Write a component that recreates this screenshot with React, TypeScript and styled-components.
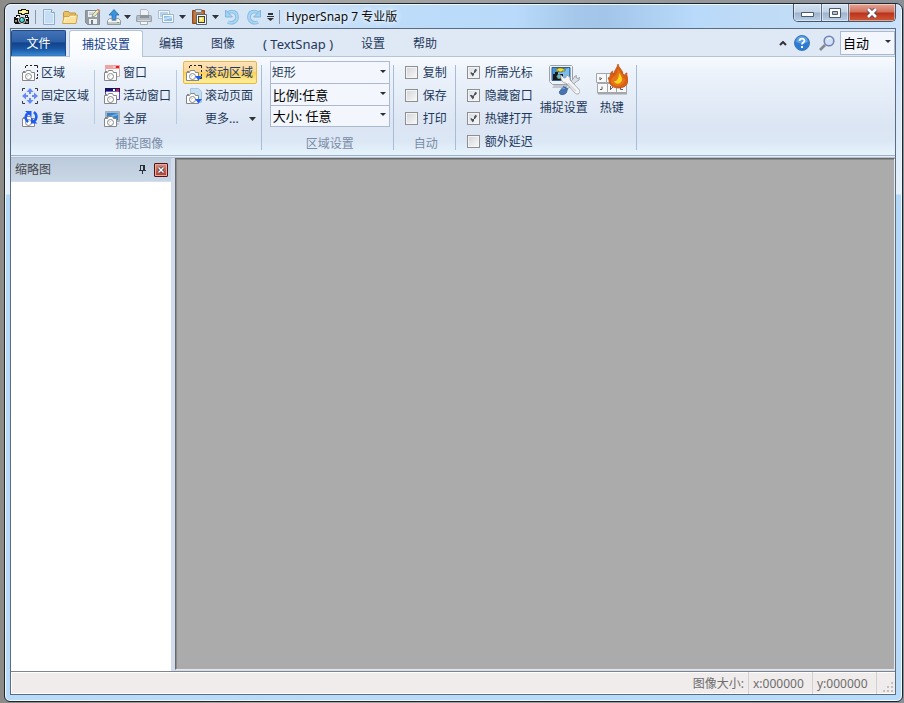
import React from "react";
import styled, { createGlobalStyle, css } from "styled-components";

const font = '"Noto Sans", "Noto Sans CJK SC", sans-serif';

const Global = createGlobalStyle`
  * { box-sizing: border-box; }
  body { margin: 0; font: 12px/16px ${font}; color: #1e395b; }
  button, select, input { font: inherit; color: inherit; margin: 0; padding: 0; }
  button { background: none; border: 0; cursor: default; white-space: nowrap; }
  svg { display: block; flex: none; }
`;

const Desktop = styled.div`
  display: flex;
  height: 100vh;
  padding: 3px 1px 1px 4px;
  background: linear-gradient(90deg, #8d8b88, #a9a8a5 30%, #8b8f96);
`;

const Window = styled.main`
  flex: 1;
  min-width: 0;
  display: flex;
  flex-direction: column;
  padding: 0 6px 6px 5px;
  border: 1px solid #1d252e;
  border-radius: 7px 7px 6px 6px;
  background: linear-gradient(180deg, #c9e0f8 0, #e4f0fc 190px, #b4d8fa 191px, #b9dbfa 100%);
  box-shadow: inset 0 0 0 1px #f0f8ff;
`;

const TitleBar = styled.header`
  display: flex;
  height: 24px;
  margin: 0 0 0 -4px;
  padding-left: 6px;
  border-radius: 6px 6px 0 0;
  border-top: 1px solid #f0f8ff;
  background: linear-gradient(90deg, #d8e4f2 0, #d6e5f5 240px, #bddcfa 390px, #b9dafa 510px, #a5c8ea 570px, #a3c5e8 600px, #b9dafa 690px, #c0dbf5 760px, #c9e2fb 100%);
`;

const QuickAccess = styled.nav`
  display: flex;
  align-items: center;
  flex: 1;
  min-width: 0;
  height: 24px;
`;

const Tool = styled.button<{ $w: number }>`
  flex: none;
  display: flex;
  justify-content: center;
  align-items: center;
  width: ${(p) => p.$w}px;
  height: 20px;
`;

const TitleRule = styled.span`
  flex: none;
  width: 1px;
  height: 14px;
  margin: 0 3px;
  background: #8497ae;
`;

const Title = styled.h1`
  margin: 0 0 0 3px;
  font-size: 12px;
  font-weight: 400;
  color: #0c0c0c;
  text-shadow: 0 0 6px #fff, 0 0 6px #fff;
  white-space: nowrap;
`;

const WindowButtons = styled.div`
  display: flex;
  flex: none;
  height: 18px;
  margin-top: -1px;
  border: 1px solid #46566a;
  border-top: 0;
  border-radius: 0 0 5px 5px;
  overflow: hidden;
`;

const WindowButton = styled.button<{ $close?: boolean }>`
  display: flex;
  align-items: center;
  justify-content: center;
  width: ${(p) => (p.$close ? 46 : 27)}px;
  &:first-child { width: 28px; padding-top: 3px; }
  border-right: ${(p) => (p.$close ? "0" : "1px solid #5d6f85")};
  box-shadow: inset 0 0 0 1px rgba(255, 255, 255, 0.45);
  background: ${(p) =>
    p.$close
      ? "linear-gradient(#e5a595, #d0705c 48%, #b9321c 52%, #cf5a38)"
      : "linear-gradient(#d5e3f2, #c0d2e6 48%, #9db2cb 52%, #b9d0e8)"};
`;

const Client = styled.div`
  flex: 1;
  min-height: 0;
  display: flex;
  flex-direction: column;
  border: 1px solid #5b6b80;
  background: #d3dced;
`;

const TabRow = styled.div`
  display: flex;
  align-items: stretch;
  flex: none;
  height: 28px;
  padding-top: 1px;
  border-bottom: 1px solid #b4c4da;
  background: #dfe8f5;
`;

const FileButton = styled.button`
  width: 55px;
  margin-right: 3px;
  padding-top: 2px;
  color: #fff;
  border: 1px solid #1d4a8d;
  border-bottom-color: #3c7ac4;
  border-radius: 2px 2px 0 0;
  background: linear-gradient(#4373b6, #2c5fa8 45%, #124288 50%, #1a57a6 75%, #3585cf);
`;

const Tabs = styled.div`
  display: flex;
  flex: 1;
`;

const Tab = styled.button<{ $active?: boolean; $latin?: boolean }>`
  padding: 2px 14px 0;
  font-size: ${(p) => (p.$latin ? 13 : 12)}px;
  ${(p) =>
    p.$active &&
    css`
      padding: 2px 12px 0;
      margin: 0 2px -1px 0;
      color: #15428b;
      border: 1px solid #b4c4da;
      border-bottom: 0;
      border-radius: 3px 3px 0 0;
      background: linear-gradient(#fff, #f7faff);
    `}
`;

const TabTools = styled.div`
  display: flex;
  align-items: center;
`;

const Ribbon = styled.section`
  display: flex;
  flex: none;
  height: 98px;
  padding: 4px 0 5px;
  background: linear-gradient(#f7faff 0, #edf3fb 14px, #e1eaf6 50px, #dbe5f3 70px, #dce7f5 84px, #e6f3fc 98px);
`;

const Group = styled.fieldset<{ $pad: string }>`
  display: flex;
  flex-direction: column;
  justify-content: space-between;
  min-width: 0;
  margin: 0;
  padding: ${(p) => p.$pad};
  border: 0;
  background: linear-gradient(transparent 4px, #a9bcd6 4px) right / 1px 100% no-repeat;
`;

const GroupBody = styled.div`
  display: flex;
`;

const GroupLabel = styled.div`
  height: 14px;
  text-align: center;
  color: #7a8ba5;
`;

const Column = styled.div<{ $w?: number; $rule?: boolean }>`
  display: flex;
  flex-direction: column;
  width: ${(p) => (p.$w ? p.$w + "px" : "auto")};
  ${(p) =>
    p.$rule &&
    css`
      margin-right: 6px;
      background: linear-gradient(transparent 9px, #b9c9df 9px, #b9c9df 63px, transparent 63px) right / 1px 100% no-repeat;
    `}
`;

const Command = styled.button<{ $on?: boolean }>`
  display: flex;
  align-items: center;
  align-self: flex-start;
  gap: 3px;
  height: 23px;
  padding: 0 3px 0 2px;
  border: 1px solid transparent;
  ${(p) =>
    p.$on &&
    css`
      border-color: #f0b73a;
      border-radius: 2px;
      background: linear-gradient(#fce2b8, #fbd896 45%, #fdd156 50%, #fff0a0);
    `}
`;

const MoreText = styled.span`
  margin: 0 7px 0 19px;
`;

const Combo = styled.label<{ $w: number; $h: number }>`
  position: relative;
  display: block;
  width: ${(p) => p.$w}px;
  height: ${(p) => p.$h}px;
  & + & { margin-top: -1px; }
  & > svg { position: absolute; right: 4px; top: calc(50% - 3px); pointer-events: none; }
`;

const Select = styled.select<{ $small?: boolean }>`
  appearance: none;
  width: 100%;
  height: 100%;
  padding-left: ${(p) => (p.$small ? 1 : 2)}px;
  border: 1px solid #abbad0;
  border-radius: 0;
  background: #f3f7fd;
  color: ${(p) => (p.$small ? "#1e395b" : "#000")};
  font-size: ${(p) => (p.$small ? 12 : 13)}px;
`;

const Check = styled.label`
  display: flex;
  align-items: center;
  gap: 5px;
  height: 23px;
  white-space: nowrap;
`;

const CheckBox = styled.input`
  appearance: none;
  width: 13px;
  height: 13px;
  border: 1px solid #8e8f8f;
  background: linear-gradient(135deg, #d4d7dc, #f6f6f6) content-box, #f4f4f4;
  padding: 1px;
  outline: 1px solid #f4f4f4;
  outline-offset: -2px;
  &:checked {
    background: url("data:image/svg+xml,%3Csvg xmlns='http://www.w3.org/2000/svg' viewBox='0 0 11 11'%3E%3Cpath d='M2.4 5.2 4.4 8 8.5 2.2' fill='none' stroke='%234a5260' stroke-width='1.8'/%3E%3C/svg%3E"), linear-gradient(135deg, #d9dce0, #f8f8f8);
  }
`;

const BigButton = styled.button`
  display: flex;
  flex-direction: column;
  align-items: center;
  gap: 4px;
  padding: 3px 0 0;
  height: 64px;
`;

const Divider = styled.div`
  flex: none;
  height: 3px;
  border-top: 1px solid #9fb0c9;
  border-bottom: 1px solid #b3bfcf;
  background: #e4ecf6;
`;

const Work = styled.div`
  display: flex;
  flex: 1;
  min-height: 0;
`;

const Panel = styled.aside`
  display: flex;
  flex-direction: column;
  width: 160px;
  background: #fff;
`;

const PanelHead = styled.div`
  display: flex;
  align-items: center;
  height: 24px;
  padding: 0 3px 0 4px;
  color: #46484c;
  background: linear-gradient(#bccbdb, #c9d6e6);
  border-bottom: 1px solid #d3dbee;
`;

const PanelTitle = styled.h2`
  flex: 1;
  margin: 0;
  font-size: 12px;
  font-weight: 400;
`;

const PanelClose = styled.button`
  display: flex;
  align-items: center;
  justify-content: center;
  width: 14px;
  height: 14px;
  margin-left: 7px;
  border: 1px solid #54131c;
  border-radius: 1px;
  box-shadow: inset 0 0 0 1px #e7a99d;
  background: linear-gradient(#d98e80, #b5392a);
`;

const Canvas = styled.section`
  flex: 1;
  margin: 0 0 1px 4px;
  border: 1px solid #e8e8ea;
  border-top-color: #696969;
  border-left-color: #696969;
  box-shadow: inset 1px 1px 0 #8a8a8a;
  background: #ababab;
`;

const StatusBar = styled.footer`
  display: flex;
  flex: none;
  justify-content: flex-end;
  height: 23px;
  border-top: 1px solid #7f858d;
  box-shadow: inset 1px 1px 0 #fff, inset 0 -1px 0 #fff;
  color: #6d6d6d;
  background: #f0ecec;
`;

const StatusCell = styled.span<{ $w?: number }>`
  display: flex;
  align-items: center;
  width: ${(p) => (p.$w ? p.$w + "px" : "auto")};
  padding: 1px 4px 0;
  border-right: 1px solid #d3d0d0;
`;

const Grip = styled.span`
  display: flex;
  align-items: flex-end;
  justify-content: flex-end;
  width: 18px;
  padding: 2px;
`;

const Icon = ({ w = 16, h = 16, children }: { w?: number; h?: number; children: React.ReactNode }) => (
  <svg width={w} height={h} viewBox={`0 0 ${w} ${h}`} fill="none" aria-hidden="true">{children}</svg>
);

const Caret = () => <Icon w={7} h={4}><path d="M0 0h7L3.500 4z" fill="#2f3236" /></Icon>;
const SmallCaret = () => <Icon w={6} h={3}><path d="M0 0h6L3 3z" fill="#26303c" /></Icon>;

const Camera = () => (
  <g stroke="#858789">
    <path d="M.5 7.500h3l1-2h4l1 2h3v8H.5z" fill="#fff" />
    <path d="M1 6.500h2" />
    <circle cx="6.500" cy="11.500" r="3" fill="#fff" />
    <path d="M5.500 11.500q0-1 1-1" stroke="#b8b8b8" />
  </g>
);

const Dashes = () => <path d="M4 .5h2M8 .5h2M12 .5h3.500V3M15.500 5v2M15.500 9v2M3.500 1v2M14 13.500h1.500V12" stroke="#222" />;

const AppIcon = () => (
  <Icon>
    <path d="M4 1h3V0h5v1h3v4h-4v1H7V5H4z" fill="#111" />
    <path d="M5 2h3V1h4v1h2v2h-4v1H8V4H5z" fill="#ffef38" />
    <path d="M7 3h2V2h2v2H8" stroke="#fff" />
    <path d="M0 8h2V6h4v2h5V6h3v2h1v7H1v-1H0z" fill="#111" />
    <path d="M2 8.500h3M3 7.500h2M12 7.500h1M11 9.500h3M2 11v2M13 12v2" stroke="#fff" />
    <circle cx="8" cy="11" r="3.500" fill="#111" stroke="#eee" />
    <circle cx="8" cy="11" r="2" fill="#35dbd5" />
    <path d="M7 10h1" stroke="#fff" />
  </Icon>
);

const NewIcon = () => (
  <Icon>
    <path d="M2.500.5h8l3 3v12h-11z" fill="#dfeefb" stroke="#8cadcc" />
    <path d="M4 2h6v3h2v9H4z" fill="#c5def4" />
    <path d="M10.500.5v3h3" fill="#fff" stroke="#7ca1c4" />
  </Icon>
);
const OpenIcon = () => (
  <Icon>
    <path d="M1.500 13.500v-10l1-1h4l1 1.500h6v9z" fill="#e8bf61" stroke="#c1953b" />
    <path d="M.5 14.500l1.500-7h5l1-1.500h7.500l-1.500 8.500z" fill="#fbe29a" stroke="#cfa347" />
    <path d="M2 13l1-4h4l1.500-1.500h5" stroke="#fff2c8" />
  </Icon>
);
const SaveIcon = () => (
  <Icon>
    <path d="M.5 1.500h14v14h-12l-2-2z" fill="#969ca3" stroke="#858b92" />
    <path d="M3 2h9v6H3zM4 10h8v5H4z" fill="#edf0f3" />
    <path d="M4 4h5M4 5.500h4" stroke="#b5bcc4" />
    <path d="M6 11h2v4H6z" fill="#757c84" />
    <path d="M7 8l1-3L13 0l2 1.500L10 7z" fill="#f0eac2" stroke="#7e8a65" strokeWidth=".7" />
    <path d="M13 0l2 1.500-1.200 1L12 1z" fill="#ee7a70" />
  </Icon>
);
const UploadIcon = () => (
  <Icon>
    <path d="M8 .5L13 6h-3v5H6V6H3z" fill="#3c91db" stroke="#1e6fb8" strokeWidth=".8" />
    <path d="M1.500 11.500l2-2H6v2h4v-2h2.500l2 2v4h-13z" fill="#f3f5f6" stroke="#9299a0" />
    <path d="M2 13h12v2H2z" fill="#c4c9ce" />
    <path d="M11 13.500h2" stroke="#55b84a" />
  </Icon>
);
const PrintIcon = () => (
  <Icon>
    <path d="M4.500.5h6l2 2V7h-8z" fill="#edf1f4" stroke="#b0b8c0" />
    <path d="M1 6.500h14l.5 1v5H.5v-5z" fill="#b3bac1" stroke="#9aa2ab" />
    <path d="M4 6h9v3H4z" fill="#8b939c" />
    <path d="M2 11.500h12" stroke="#d4d9de" />
    <path d="M4.500 12.500h7v3h-7z" fill="#f4f6f8" stroke="#a5adb5" />
  </Icon>
);
const WindowsIcon = () => (
  <Icon>
    <path d="M.5 1.500h11v8H.5z" fill="#eef5fc" stroke="#a9bfd6" />
    <path d="M2 3h8v5H2z" fill="#b4d2ee" />
    <path d="M4.500 5.500h11v8h-11z" fill="#f6fafd" stroke="#9cb4ce" />
    <path d="M6 7h8v5H6z" fill="#8fbde9" />
    <path d="M6 9l8-2v2l-8 2z" fill="#c3dff7" />
  </Icon>
);
const PasteIcon = () => (
  <Icon>
    <path d="M1.500 1.500h12v13h-12z" fill="#b5652f" stroke="#8d4a20" />
    <path d="M3 3h9v10H3z" fill="#c27840" />
    <path d="M4.500.5h6v3h-6z" fill="#d7dce2" stroke="#7d838b" />
    <path d="M5.500 5.500h10v10h-10z" fill="#f3f5f7" stroke="#5c646e" />
    <path d="M7 7h7v7H7z" fill="#3b4048" /><path d="M8 8h5v5H8z" fill="#f8de55" />
    <circle cx="10" cy="10" r="1.500" fill="#fff7b8" />
  </Icon>
);
const UndoIcon = () => (
  <Icon>
    <path d="M4 4c4-3 9-1 9 4s-5 7-9 5" stroke="#80b6e0" strokeWidth="3.600" />
    <path d="M4 4c4-3 9-1 9 4s-5 7-9 5" stroke="#a9d6f5" strokeWidth="2" />
    <path d="M1.500 1v7h7z" fill="#a3d2f3" stroke="#80b6e0" />
  </Icon>
);
const RedoIcon = () => (
  <Icon>
    <path d="M12 4C8 1 3 3 3 8s5 7 9 5" stroke="#80b6e0" strokeWidth="3.600" />
    <path d="M12 4C8 1 3 3 3 8s5 7 9 5" stroke="#a9d6f5" strokeWidth="2" />
    <path d="M14.500 1v7h-7z" fill="#a3d2f3" stroke="#80b6e0" />
  </Icon>
);
const CustomizeIcon = () => <Icon w={7} h={8}><path d="M1 0h5v2H1zM0 3h7v1H0zM0 5h7L3.500 8z" fill="#2f3236" /></Icon>;

const RegionIcon = () => <Icon><Dashes /><Camera /></Icon>;
const FixedIcon = () => (
  <Icon>
    <path d="M.5 3V.5H3M13 .5h2.500V3M.5 13v2.500H3M13 15.500h2.500V13" stroke="#34373c" />
    <path d="M8 0l3.500 4H9v2H7V4H4.500zM8 16l3.500-4H9v-2H7v2H4.500zM0 8l4-3.500V7h2v2H4v2.500zM16 8l-4-3.500V7h-2v2h2v2.500z" fill="#6688f5" />
  </Icon>
);
const RepeatIcon = () => (
  <Icon>
    <Camera />
    <path d="M6 11C2.500 8 3 4 6.500 2M12 1c3.500 3 3 7 0 9.500" stroke="#1f5cf0" strokeWidth="2.600" />
    <path d="M3 0h6.500v6zM15.500 12.500H9v-6z" fill="#1f5cf0" />
  </Icon>
);
const WindowIcon = ({ active = false }: { active?: boolean }) => (
  <Icon>
    <path d="M1.500 1.500h14v10h-14z" fill="#f8f9fc" stroke={active ? "#5a3fd0" : "#c4a9b2"} />
    <path d="M1 0h15v4H1z" fill={active ? "#18135d" : "#f0a3a0"} />
    {active && <path d="M2 3.500h13" stroke="#7360e0" />}
    <path d="M9 1h2v2H9z" fill={active ? "#fff" : "#f6c4c2"} />
    <path d="M12 1h3v2h-3z" fill="#e51b1b" />
    <Camera />
  </Icon>
);
const ScreenIcon = () => (
  <Icon>
    <path d="M1.500.5h14v10h-14z" fill="#a9b5c3" stroke="#a3aebb" />
    <path d="M3 2h11v7H3z" fill="#3380c8" /><path d="M3 6l11-4v2L3 8z" fill="#67b0e7" />
    <path d="M11 12h4v2h-4z" fill="#c3cbd3" />
    <Camera />
  </Icon>
);
const ScrollIcon = ({ page = false }: { page?: boolean }) => (
  <Icon>
    {page ? <path d="M4.500.5h8l3 3v11h-11z" fill="#c5def4" stroke="#a9c6df" /> : <Dashes />}
    <Camera />
    <path d="M9 11h7l-3.500 4.500z" fill="#1f5cf0" />
  </Icon>
);

const CaptureIcon = () => (
  <Icon w={32} h={32}>
    <path d="M6 21h14l2 3H4z" fill="#c3c8ce" />
    <path d="M1.500 2.500l1-1h21l1 1v15l-3 3h-17l-3-3z" fill="#f0f2f4" stroke="#9aa1a9" />
    <path d="M4 3.500h18v13H4z" fill="#4a98da" stroke="#2c5f96" /><path d="M5 11l16-7v8l-8 4H5z" fill="#7dbdee" />
    <path d="M8 5h2V4h5v1h2v2h-3v1h-3V7H8z" fill="#f2df2e" stroke="#55552a" strokeWidth=".6" />
    <path d="M5 10h2V8h3v2h5v6H5z" fill="#17191b" /><circle cx="11" cy="12.500" r="2" fill="#54c9bd" stroke="#7c8f92" />
    <path d="M25.500 14.500l1-2 2-1-.5 2 2 1 1.500-1-.5 2.500-2.500 1.500-11 9-1.500-1.500z" fill="#dce0e4" stroke="#8e949a" strokeWidth=".8" />
    <path d="M15.500 22.500l4 2-1 4c-2 3-8 3-7-1z" fill="#4673b4" stroke="#34598f" strokeWidth=".8" />
    <path d="M13.500 23.500l3 1" stroke="#98b9e4" />
    <path d="M13 11l3 3 2-.5.5-2.500c3 1 4 3 3.500 5l9.500 10c1.500 3-1.500 5-4 3.500L18 19c-3 .5-6-3-5-8z" fill="#f6f6f7" stroke="#92979d" strokeWidth=".8" />
    <path d="M20 19l8 8" stroke="#d2d5d8" strokeWidth="1.500" />
  </Icon>
);
const HotkeyIcon = () => (
  <Icon w={32} h={32}>
    <path d="M1 28h30v2.500H2z" fill="#a5a8ab" />
    <g fill="#f8f8f8" stroke="#a4a7aa"><path d="M.5 9.500h10v9H.5zM10.500 9.500h9v9h-9zM1.500 19.500h10v9h-10zM11.500 19.500h9v9h-9zM20.500 19.500h10v9h-10z" /></g>
    <path d="M4 13v3l2-2M6 22.500v3H4M14.500 22v4M17 23l-2 2M24.500 22v3.500H27" stroke="#5a5d61" />
    <path d="M22 0c.5 4 5 6 5 10l1 1c1 0 1.500-1 2-2l1 0c-1 2 1 4 1 7 0 5-4 8-9 8-6 0-10-3-10-8l-1-2 2-1c0-3 1-5 2.500-6l.5 3h1c0-4 3-5 4-10z" fill="#d95f12" stroke="#b8480e" strokeWidth=".7" />
    <path d="M22 4c1 4 5 6 5 10l2 1c0 4-3 7-7 7s-7-2-7-6l2-3 2-1c2-2 3-4 3-8z" fill="#e8741a" />
    <path d="M23 9c3 3 4 7 2 9-2 3-6 2-7-1l2 0c2-2 3-4 3-8z" fill="#ffd61f" />
  </Icon>
);

const HelpIcon = () => (
  <Icon>
    <circle cx="8" cy="8" r="7.500" fill="#2c7bd3" stroke="#3f78b8" />
    <path d="M2 7a6 6 0 0 1 12 0c-4 2-8 2-12 0z" fill="#5a9fe4" />
    <path d="M5.500 6c0-3 5-3 5-.3C10.500 7.500 8 7.500 8 9.500" stroke="#fff" strokeWidth="1.800" />
    <path d="M7 11h2v2H7z" fill="#fff" />
  </Icon>
);
const SearchIcon = () => (
  <Icon>
    <path d="M1 15l5-5" stroke="#85888e" strokeWidth="2.600" />
    <circle cx="10" cy="6" r="4.800" fill="#cfe0f8" stroke="#7583ae" strokeWidth="1.600" />
    <path d="M8 5c1-2 3-2 4-1" stroke="#fff" />
  </Icon>
);

const tabs = ["捕捉设置", "编辑", "图像", "( TextSnap )", "设置", "帮助"];
const autoActions = ["复制", "保存", "打印"];
const options: [string, boolean][] = [["所需光标", true], ["隐藏窗口", true], ["热键打开", true], ["额外延迟", false]];

function Dropdown({ value, label, w, h, small }: { value: string; label: string; w: number; h: number; small?: boolean }) {
  return (
    <Combo $w={w} $h={h}>
      <Select $small={small} aria-label={label}><option>{value}</option></Select>
      <SmallCaret />
    </Combo>
  );
}

export default function App() {
  return (
    <>
      <Global />
      <Desktop>
        <Window>
          <TitleBar>
            <QuickAccess>
              <Tool $w={20} aria-label="HyperSnap"><AppIcon /></Tool>
              <TitleRule />
              <Tool $w={19} aria-label="新建"><NewIcon /></Tool>
              <Tool $w={24} aria-label="打开"><OpenIcon /></Tool>
              <Tool $w={22} aria-label="保存"><SaveIcon /></Tool>
              <Tool $w={20} aria-label="上传"><UploadIcon /></Tool>
              <Tool $w={7} aria-label="上传选项"><Caret /></Tool>
              <Tool $w={25} aria-label="打印"><PrintIcon /></Tool>
              <Tool $w={20} aria-label="窗口"><WindowsIcon /></Tool>
              <Tool $w={12} aria-label="窗口选项"><Caret /></Tool>
              <Tool $w={22} aria-label="粘贴"><PasteIcon /></Tool>
              <Tool $w={10} aria-label="粘贴选项"><Caret /></Tool>
              <Tool $w={24} aria-label="撤消"><UndoIcon /></Tool>
              <Tool $w={20} aria-label="重做"><RedoIcon /></Tool>
              <Tool $w={12} aria-label="自定义"><CustomizeIcon /></Tool>
              <TitleRule />
              <Title>HyperSnap 7 专业版</Title>
            </QuickAccess>
            <WindowButtons>
              <WindowButton aria-label="最小化"><Icon w={13} h={5}><path d="M.5.5h12v4H.5z" fill="#fff" stroke="#4d5969" /></Icon></WindowButton>
              <WindowButton aria-label="最大化"><Icon w={12} h={10}><path d="M.5.5h11v9H.5z" fill="#fff" stroke="#4d5969" /><path d="M3.500 3.500h5v3h-5z" fill="#adbfd2" stroke="#4d5969" /></Icon></WindowButton>
              <WindowButton $close aria-label="关闭"><Icon w={12} h={10}><path d="M2 1l8 8M10 1L2 9" stroke="#5f4a50" strokeWidth="4.500" /><path d="M2 1l8 8M10 1L2 9" stroke="#fff" strokeWidth="2.600" /></Icon></WindowButton>
            </WindowButtons>
          </TitleBar>
          <Client>
            <TabRow>
              <FileButton>文件</FileButton>
              <Tabs role="tablist">
                {tabs.map((t, i) => (
                  <Tab key={t} role="tab" aria-selected={i === 0} $active={i === 0} $latin={/[a-z]/i.test(t)}>{t}</Tab>
                ))}
              </Tabs>
              <TabTools>
                <Tool $w={14} aria-label="折叠"><Icon w={8} h={5}><path d="M1 4l3-3 3 3" stroke="#2f3236" strokeWidth="2" /></Icon></Tool>
                <Tool $w={24} aria-label="帮助"><HelpIcon /></Tool>
                <Tool $w={26} aria-label="搜索"><SearchIcon /></Tool>
                <Dropdown value="自动" label="模式" w={55} h={24} />
              </TabTools>
            </TabRow>
            <Ribbon>
              <Group $pad="0 2px 0 8px" aria-label="捕捉图像">
                <GroupBody>
                  <Column $w={76} $rule>
                    <Command><RegionIcon />区域</Command>
                    <Command><FixedIcon />固定区域</Command>
                    <Command><RepeatIcon />重复</Command>
                  </Column>
                  <Column $w={76} $rule>
                    <Command><WindowIcon />窗口</Command>
                    <Command><WindowIcon active />活动窗口</Command>
                    <Command><ScreenIcon />全屏</Command>
                  </Column>
                  <Column>
                    <Command $on><ScrollIcon />滚动区域</Command>
                    <Command><ScrollIcon page />滚动页面</Command>
                    <Command><MoreText>更多...</MoreText><Caret /></Command>
                  </Column>
                </GroupBody>
                <GroupLabel>捕捉图像</GroupLabel>
              </Group>
              <Group $pad="0 4px 0 8px" aria-label="区域设置">
                <Column>
                  <Dropdown value="矩形" label="形状" w={120} h={23} small />
                  <Dropdown value="比例:任意" label="比例" w={120} h={23} />
                  <Dropdown value="大小: 任意" label="大小" w={120} h={22} />
                </Column>
                <GroupLabel>区域设置</GroupLabel>
              </Group>
              <Group $pad="0 9px 0 11px" aria-label="自动">
                <Column>
                  {autoActions.map((a) => <Check key={a}><CheckBox type="checkbox" />{a}</Check>)}
                </Column>
                <GroupLabel>自动</GroupLabel>
              </Group>
              <Group $pad="0 8px 0 11px" aria-label="选项">
                <GroupBody>
                  <Column $w={66}>
                    {options.map(([name, on]) => <Check key={name}><CheckBox type="checkbox" defaultChecked={on} />{name}</Check>)}
                  </Column>
                  <Column $w={62}><BigButton><CaptureIcon />捕捉设置</BigButton></Column>
                  <Column $w={34}><BigButton><HotkeyIcon />热键</BigButton></Column>
                </GroupBody>
              </Group>
            </Ribbon>
            <Divider />
            <Work>
              <Panel>
                <PanelHead>
                  <PanelTitle>缩略图</PanelTitle>
                  <Tool $w={9} aria-label="固定"><Icon w={7} h={9}><path d="M1.500 0v5M2 .5h3M4.500 0v5M5.500 0v5M0 5.500h7M3.500 6v3" stroke="#28313a" /></Icon></Tool>
                  <PanelClose aria-label="关闭缩略图"><Icon w={8} h={8}><path d="M1.500 1.500l5 5M6.500 1.500l-5 5" stroke="#3c3e46" strokeWidth="3" /><path d="M1.500 1.500l5 5M6.500 1.500l-5 5" stroke="#fff" strokeWidth="1.500" /></Icon></PanelClose>
                </PanelHead>
              </Panel>
              <Canvas aria-label="图像" />
            </Work>
            <StatusBar>
              <StatusCell>图像大小:</StatusCell>
              <StatusCell $w={64}>x:000000</StatusCell>
              <StatusCell $w={64}>y:000000</StatusCell>
              <Grip><Icon w={11} h={11}><path d="M9 1h2v2H9zM5 5h2v2H5zM9 5h2v2H9zM1 9h2v2H1zM5 9h2v2H5zM9 9h2v2H9z" fill="#c3c0c0" /></Icon></Grip>
            </StatusBar>
          </Client>
        </Window>
      </Desktop>
    </>
  );
}
